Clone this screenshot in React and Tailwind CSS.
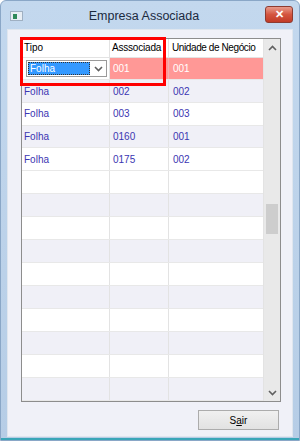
import React from "react";

const rows = [
  { tipo: "Folha", assoc: "002", unid: "002" },
  { tipo: "Folha", assoc: "003", unid: "003" },
  { tipo: "Folha", assoc: "0160", unid: "001" },
  { tipo: "Folha", assoc: "0175", unid: "002" },
];

const Chevron = ({ up }) => (
  <svg width="9" height="6" viewBox="0 0 9 6">
    <path
      d={up ? "M1 5 L4.5 1.5 L8 5" : "M1 1 L4.5 4.5 L8 1"}
      fill="none"
      stroke="#606060"
      strokeWidth="1.6"
    />
  </svg>
);

const App = () => {
  const empties = Array.from({ length: 10 });
  return (
    <div
      className="w-[300px] h-[441px] flex flex-col bg-gradient-to-b from-[#c3d8ee] to-[#b6cde6] border border-[#8aa7c7] rounded-t-[6px] overflow-hidden"
      style={{ fontFamily: "'Liberation Sans', Arial, sans-serif" }}
    >
      <div className="h-[28px] flex items-center relative shrink-0">
        <div className="ml-[9px] mt-[2px] w-[13px] h-[10px] bg-[#e8eef4] border border-[#9fb0c2] flex items-center">
          <div className="ml-[2px] w-[4px] h-[5px] bg-[#2f8a5a]" />
        </div>
        <div className="flex-1 text-center text-[12.5px] text-[#1b2a3f] mt-[3px]">
          Empresa Associada
        </div>
        <div className="mr-[6px] mt-[-1px] w-[28px] h-[17px] rounded-[3px] bg-gradient-to-b from-[#e79a8b] via-[#d4553f] to-[#c23b26] border border-[#8e3b30] flex items-center justify-center text-white text-[11px] font-bold">
          ✕
        </div>
      </div>
      <div className="mx-[6px] h-[408px] bg-[#f0f1f8] border border-[#dfe6ee] flex flex-col">
        <div className="ml-[13px] mt-[8px] w-[260px] h-[364px] border border-[#8d8d8d] bg-white relative flex text-[10px] whitespace-nowrap">
          <div className="w-[241px] flex flex-col">
            <div className="h-[19px] flex border-b border-[#e3e3e3] text-black">
              <div className="w-[88px] pl-[2px] flex items-center border-r border-[#e3e3e3]">Tipo</div>
              <div className="w-[59px] pl-[2px] flex items-center border-r border-[#e3e3e3] tracking-[-0.2px]">Asssociada</div>
              <div className="w-[94px] pl-[3px] flex items-center tracking-[-0.4px]">Unidade de Negócio</div>
            </div>
            <div className="h-[23px] flex border-b border-[#e8e8e8] text-white">
              <div className="w-[88px] flex items-center border-r border-[#e3e3e3] bg-white">
                <div className="ml-[4px] w-[81px] h-[17px] border border-[#9a9a9a] flex items-center bg-white">
                  <div className="ml-[1px] w-[62px] h-[13px] bg-[#3399ff] border border-dotted border-[#333] text-white flex items-center pl-[1px]">
                    Folha
                  </div>
                  <div className="flex-1 flex justify-center">
                    <Chevron />
                  </div>
                </div>
              </div>
              <div className="w-[59px] pl-[3px] flex items-center border-r border-[#f2b0b0] bg-[#ff9896]">001</div>
              <div className="w-[94px] pl-[4px] flex items-center bg-[#ff9896]">001</div>
            </div>
            {rows.map((r, i) => (
              <div
                key={i}
                className={`h-[23px] flex border-b border-[#e8e8e8] text-[#3b36b2] ${i % 2 === 0 ? "bg-[#f0f0f7]" : "bg-white"}`}
              >
                <div className="w-[88px] pl-[2px] flex items-center border-r border-[#e3e3e3]">{r.tipo}</div>
                <div className="w-[59px] pl-[3px] flex items-center border-r border-[#e3e3e3]">{r.assoc}</div>
                <div className="w-[94px] pl-[4px] flex items-center">{r.unid}</div>
              </div>
            ))}
            {empties.map((_, i) => (
              <div
                key={i}
                className={`h-[23px] shrink-0 flex border-b border-[#e8e8e8] ${i % 2 === 0 ? "bg-white" : "bg-[#f0f0f7]"}`}
              >
                <div className="w-[88px] border-r border-[#e3e3e3]" />
                <div className="w-[59px] border-r border-[#e3e3e3]" />
                <div className="w-[94px]" />
              </div>
            ))}
          </div>
          <div className="w-[17px] bg-[#e9e9e9] border-l border-[#e3e3e3] flex flex-col items-center">
            <div className="h-[17px] flex items-center justify-center">
              <Chevron up />
            </div>
            <div className="flex-1 w-full relative">
              <div className="absolute left-[2px] right-[2px] top-[148px] h-[30px] bg-[#cdcdcd]" />
            </div>
            <div className="h-[17px] flex items-center justify-center">
              <Chevron />
            </div>
          </div>
          <div className="absolute left-[-2px] top-[-2px] w-[146px] h-[49px] border-[3px] border-[#ff0000]" />
        </div>
        <div className="flex justify-end mt-[8px] mr-[13px]">
          <div className="w-[81px] h-[20px] border border-[#acacac] bg-gradient-to-b from-[#f0f0f0] to-[#e2e2e2] flex items-center justify-center text-[10px] text-black">
            S<span className="underline">a</span>ir
          </div>
        </div>
      </div>
      <div className="flex-1" />
      <div className="h-[2px] bg-[#3aa6b8]" />
    </div>
  );
};

export default App;
